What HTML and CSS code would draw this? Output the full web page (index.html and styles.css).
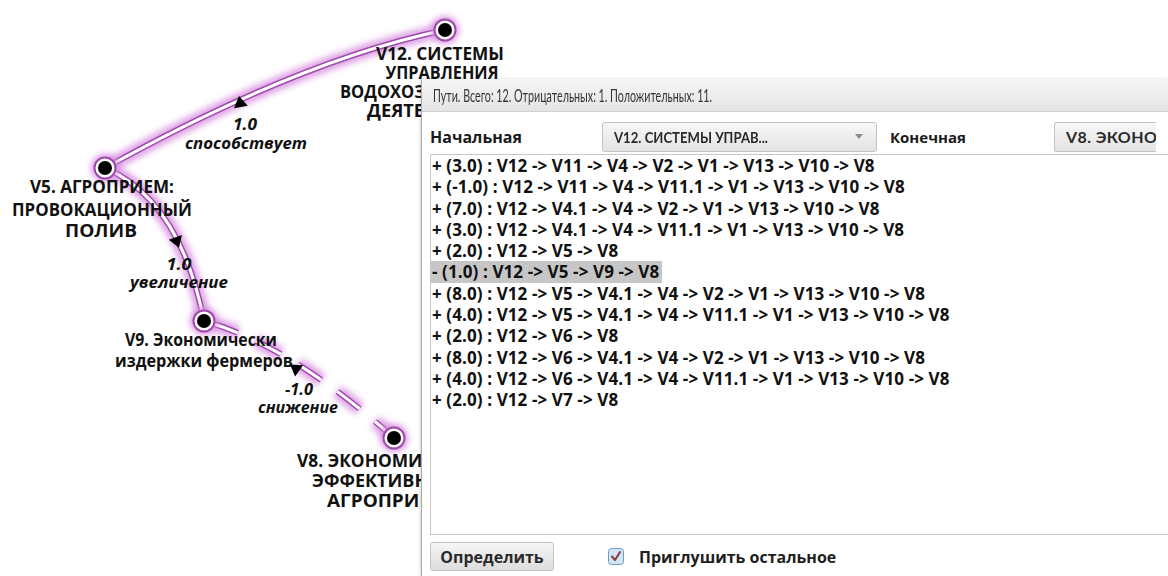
FILE: index.html
```html
<!DOCTYPE html>
<html lang="ru">
<head>
<meta charset="utf-8">
<title>Пути</title>
<link rel="stylesheet" href="styles.css">
</head>
<body>
<div class="scene">
  <svg class="graph" width="1168" height="576" viewBox="0 0 1168 576">
    <defs>
      <filter id="glow" x="-20%" y="-20%" width="140%" height="140%">
        <feGaussianBlur stdDeviation="3"/>
      </filter>
    </defs>
    <g class="edge">
      <path class="e-glow" d="M445,30 Q300,60 105,168"/>
      <path class="e-rim" d="M445,30 Q300,60 105,168"/>
      <path class="e-core" d="M445,30 Q300,60 105,168"/>
    </g>
    <g class="edge">
      <path class="e-glow" d="M105,168 Q180,200 204,321"/>
      <path class="e-rim" d="M105,168 Q180,200 204,321"/>
      <path class="e-core" d="M105,168 Q180,200 204,321"/>
    </g>
    <g class="edge dashed">
      <path class="e-glow" d="M204,321 Q290,345 394,438"/>
      <path class="e-rim" d="M204,321 Q290,345 394,438"/>
      <path class="e-core" d="M204,321 Q290,345 394,438"/>
    </g>
    <polygon class="arrow" points="0,-6 7,5 -7,5" transform="translate(240,102) rotate(-10)"/>
    <polygon class="arrow" points="0,-6 7,5 -7,5" transform="translate(177,242) rotate(160)"/>
    <polygon class="arrow" points="0,-6 7,5 -7,5" transform="translate(295,368) rotate(-55)"/>

    <g class="node"><circle class="n-glow" cx="445" cy="30" r="14"/><circle class="n-ring" cx="445" cy="30" r="10.5"/><circle class="n-dot" cx="445" cy="30" r="7"/></g>
    <g class="node"><circle class="n-glow" cx="105" cy="168" r="14"/><circle class="n-ring" cx="105" cy="168" r="10.5"/><circle class="n-dot" cx="105" cy="168" r="7"/></g>
    <g class="node"><circle class="n-glow" cx="204" cy="321" r="14"/><circle class="n-ring" cx="204" cy="321" r="10.5"/><circle class="n-dot" cx="204" cy="321" r="7"/></g>
    <g class="node"><circle class="n-glow" cx="394" cy="438" r="14"/><circle class="n-ring" cx="394" cy="438" r="10.5"/><circle class="n-dot" cx="394" cy="438" r="7"/></g>

    <text class="elabel" x="245" y="130" textLength="24" lengthAdjust="spacingAndGlyphs">1.0</text>
    <text class="elabel" x="246" y="149" textLength="122" lengthAdjust="spacingAndGlyphs">способствует</text>
    <text class="elabel" x="179" y="270" textLength="25" lengthAdjust="spacingAndGlyphs">1.0</text>
    <text class="elabel" x="179" y="288" textLength="98" lengthAdjust="spacingAndGlyphs">увеличение</text>
    <text class="elabel" x="299" y="395" textLength="28" lengthAdjust="spacingAndGlyphs">-1.0</text>
    <text class="elabel" x="298" y="413" textLength="80" lengthAdjust="spacingAndGlyphs">снижение</text>

    <text class="nlabel" x="440" y="60" textLength="128" lengthAdjust="spacingAndGlyphs">V12. СИСТЕМЫ</text>
    <text class="nlabel" x="442" y="79" textLength="113" lengthAdjust="spacingAndGlyphs">УПРАВЛЕНИЯ</text>
    <text class="nlabel" x="441" y="98" textLength="202" lengthAdjust="spacingAndGlyphs">ВОДОХОЗЯЙСТВЕННОЙ</text>
    <text class="nlabel" x="441" y="117" textLength="148" lengthAdjust="spacingAndGlyphs">ДЕЯТЕЛЬНОСТИ</text>

    <text class="nlabel" x="102" y="193" textLength="144" lengthAdjust="spacingAndGlyphs">V5. АГРОПРИЕМ:</text>
    <text class="nlabel" x="102" y="216" textLength="180" lengthAdjust="spacingAndGlyphs">ПРОВОКАЦИОННЫЙ</text>
    <text class="nlabel" x="101" y="237" textLength="72" lengthAdjust="spacingAndGlyphs">ПОЛИВ</text>

    <text class="nlabel" x="201" y="346" textLength="152" lengthAdjust="spacingAndGlyphs">V9. Экономически</text>
    <text class="nlabel" x="204" y="367" textLength="178" lengthAdjust="spacingAndGlyphs">издержки фермеров</text>

    <text class="nlabel" x="394" y="467" textLength="194" lengthAdjust="spacingAndGlyphs">V8. ЭКОНОМИЧЕСКАЯ</text>
    <text class="nlabel" x="394" y="487" textLength="164" lengthAdjust="spacingAndGlyphs">ЭФФЕКТИВНОСТЬ</text>
    <text class="nlabel" x="394" y="507" textLength="134" lengthAdjust="spacingAndGlyphs">АГРОПРИЁМА</text>
  </svg>

  <div class="dialog">
    <div class="titlebar"><span class="title-text">Пути. Всего: 12. Отрицательных: 1. Положительных: 11.</span></div>
    <div class="content">
      <div class="selectors">
        <span class="field-label start-label">Начальная</span>
        <div class="combo combo-start"><span class="combo-text"><span class="combo-squeeze">V12. СИСТЕМЫ УПРАВ...</span></span><span class="combo-arrow"></span></div>
        <span class="field-label end-label">Конечная</span>
        <div class="combo combo-end"><span class="combo-text">V8. ЭКОНОМИЧЕСКАЯ ЭФФЕКТИВНОСТЬ</span></div>
      </div>
      <div class="list">
        <div class="row">+ (3.0) : V12 -&gt; V11 -&gt; V4 -&gt; V2 -&gt; V1 -&gt; V13 -&gt; V10 -&gt; V8</div>
        <div class="row">+ (-1.0) : V12 -&gt; V11 -&gt; V4 -&gt; V11.1 -&gt; V1 -&gt; V13 -&gt; V10 -&gt; V8</div>
        <div class="row">+ (7.0) : V12 -&gt; V4.1 -&gt; V4 -&gt; V2 -&gt; V1 -&gt; V13 -&gt; V10 -&gt; V8</div>
        <div class="row">+ (3.0) : V12 -&gt; V4.1 -&gt; V4 -&gt; V11.1 -&gt; V1 -&gt; V13 -&gt; V10 -&gt; V8</div>
        <div class="row">+ (2.0) : V12 -&gt; V5 -&gt; V8</div>
        <div class="row"><span class="selected">- (1.0) : V12 -&gt; V5 -&gt; V9 -&gt; V8</span></div>
        <div class="row">+ (8.0) : V12 -&gt; V5 -&gt; V4.1 -&gt; V4 -&gt; V2 -&gt; V1 -&gt; V13 -&gt; V10 -&gt; V8</div>
        <div class="row">+ (4.0) : V12 -&gt; V5 -&gt; V4.1 -&gt; V4 -&gt; V11.1 -&gt; V1 -&gt; V13 -&gt; V10 -&gt; V8</div>
        <div class="row">+ (2.0) : V12 -&gt; V6 -&gt; V8</div>
        <div class="row">+ (8.0) : V12 -&gt; V6 -&gt; V4.1 -&gt; V4 -&gt; V2 -&gt; V1 -&gt; V13 -&gt; V10 -&gt; V8</div>
        <div class="row">+ (4.0) : V12 -&gt; V6 -&gt; V4.1 -&gt; V4 -&gt; V11.1 -&gt; V1 -&gt; V13 -&gt; V10 -&gt; V8</div>
        <div class="row">+ (2.0) : V12 -&gt; V7 -&gt; V8</div>
      </div>
      <div class="footer">
        <button class="btn" type="button">Определить</button>
        <label class="check">
          <svg class="check-box" width="16" height="17" viewBox="0 0 16 17">
            <rect x="0.5" y="0.5" width="15" height="16" rx="3" class="cb-rect"/>
            <path d="M4,8.5 L7,12 L12,4" class="cb-tick"/>
          </svg>
          <span class="check-text">Приглушить остальное</span>
        </label>
      </div>
    </div>
  </div>
</div>
</body>
</html>
```

FILE: styles.css
```css
html, body {
  margin: 0;
  padding: 0;
  background: #ffffff;
}

.scene {
  position: relative;
  width: 1168px;
  height: 576px;
  overflow: hidden;
  background: #ffffff;
  font-family: "Open Sans", "Liberation Sans", sans-serif;
}

.graph {
  position: absolute;
  left: 0;
  top: 0;
}

.e-glow {
  fill: none;
  stroke: #d890e0;
  stroke-width: 14;
  opacity: 0.85;
  filter: url(#glow);
}

.e-rim {
  fill: none;
  stroke: #a04aae;
  stroke-width: 6;
}

.e-core {
  fill: none;
  stroke: #ffffff;
  stroke-width: 3;
}

.dashed .e-glow,
.dashed .e-rim,
.dashed .e-core {
  stroke-dasharray: 28 20;
  stroke-dashoffset: -8;
}

.arrow {
  fill: #000000;
}

.n-glow {
  fill: #d890e0;
  opacity: 0.9;
  filter: url(#glow);
}

.n-ring {
  fill: #ffffff;
  stroke: #a04aae;
  stroke-width: 2;
}

.n-dot {
  fill: #000000;
}

.nlabel {
  font-family: "Open Sans", "Liberation Sans", sans-serif;
  font-weight: 700;
  font-size: 17px;
  fill: #111111;
  text-anchor: middle;
}

.elabel {
  font-family: "Open Sans", "Liberation Sans", sans-serif;
  font-weight: 700;
  font-style: italic;
  font-size: 16px;
  fill: #111111;
  text-anchor: middle;
}

.dialog {
  position: absolute;
  left: 421px;
  top: 79px;
  right: 0;
  bottom: 0;
  background: #ffffff;
  border-left: 1px solid #a9a9a9;
  box-shadow: -1px 0 3px rgba(0, 0, 0, 0.15);
  display: flex;
  flex-direction: column;
}

.titlebar {
  height: 33px;
  flex: none;
  display: flex;
  align-items: center;
  padding-left: 11px;
  background: linear-gradient(#f6f6f6, #e4e4e4);
  border-bottom: 1px solid #d0d0d0;
  box-sizing: border-box;
  color: #333333;
  font-family: "Lato", "Liberation Sans", sans-serif;
  font-size: 17px;
  white-space: nowrap;
}

.title-text {
  display: inline-block;
  transform: scaleX(0.63);
  transform-origin: left center;
}

.content {
  display: flex;
  flex-direction: column;
  padding: 9px 0 0 8px;
}

.selectors {
  display: flex;
  align-items: center;
  height: 31px;
}

.field-label {
  font-weight: 700;
  font-size: 16px;
  color: #1a1a1a;
}

.start-label {
  width: 172px;
  flex: none;
}

.end-label {
  width: 164px;
  margin-left: 13px;
  flex: none;
  font-size: 15px;
}

.combo {
  height: 30px;
  box-sizing: border-box;
  border: 1px solid #c4c4c4;
  border-radius: 3px;
  background: linear-gradient(#f7f7f7, #e3e3e3);
  display: flex;
  align-items: center;
  padding-left: 11px;
  overflow: hidden;
  flex: none;
  font-family: "Lato", "Liberation Sans", sans-serif;
  font-weight: 700;
  font-size: 16px;
  color: #2a2a2a;
  white-space: nowrap;
}

.combo-start {
  width: 275px;
}

.combo-end {
  width: 102px;
  border-right: none;
  border-radius: 3px 0 0 3px;
  letter-spacing: 0.4px;
}

.combo-text {
  flex: 1;
  overflow: hidden;
}

.combo-squeeze {
  display: inline-block;
  transform: scaleX(0.82);
  transform-origin: left center;
}

.combo-arrow {
  width: 0;
  height: 0;
  border-left: 4px solid transparent;
  border-right: 4px solid transparent;
  border-top: 5px solid #8a8a8a;
  margin-right: 13px;
}

.list {
  margin-top: 2px;
  height: 381px;
  border: 1px solid #c8c8c8;
  border-right: none;
  box-sizing: border-box;
}

.row {
  height: 21.3px;
  line-height: 21.3px;
  padding-left: 1px;
  font-weight: 700;
  font-size: 17px;
  letter-spacing: 0.1px;
  color: #111111;
  white-space: nowrap;
}

.selected {
  display: inline-block;
  background: #c6c6c6;
  padding-right: 3px;
  margin-left: -1px;
  padding-left: 1px;
}

.footer {
  display: flex;
  align-items: center;
  padding-top: 7px;
}

.btn {
  width: 124px;
  height: 29px;
  border: 1px solid #c2c2c2;
  border-radius: 3px;
  background: linear-gradient(#f6f6f6, #dcdcdc);
  font-family: "Open Sans", "Liberation Sans", sans-serif;
  font-weight: 700;
  font-size: 16px;
  color: #2a2a2a;
  padding: 0;
}

.check {
  display: flex;
  align-items: center;
  margin-left: 54px;
}

.cb-rect {
  fill: #cfe5f5;
  stroke: #6c9cc4;
  stroke-width: 1;
}

.cb-tick {
  fill: none;
  stroke: #8b3b3b;
  stroke-width: 2;
  stroke-linecap: round;
  stroke-linejoin: round;
}

.check-text {
  margin-left: 15px;
  font-family: "Open Sans", "Liberation Sans", sans-serif;
  font-weight: 700;
  font-size: 16px;
  color: #1e1e1e;
}
```
